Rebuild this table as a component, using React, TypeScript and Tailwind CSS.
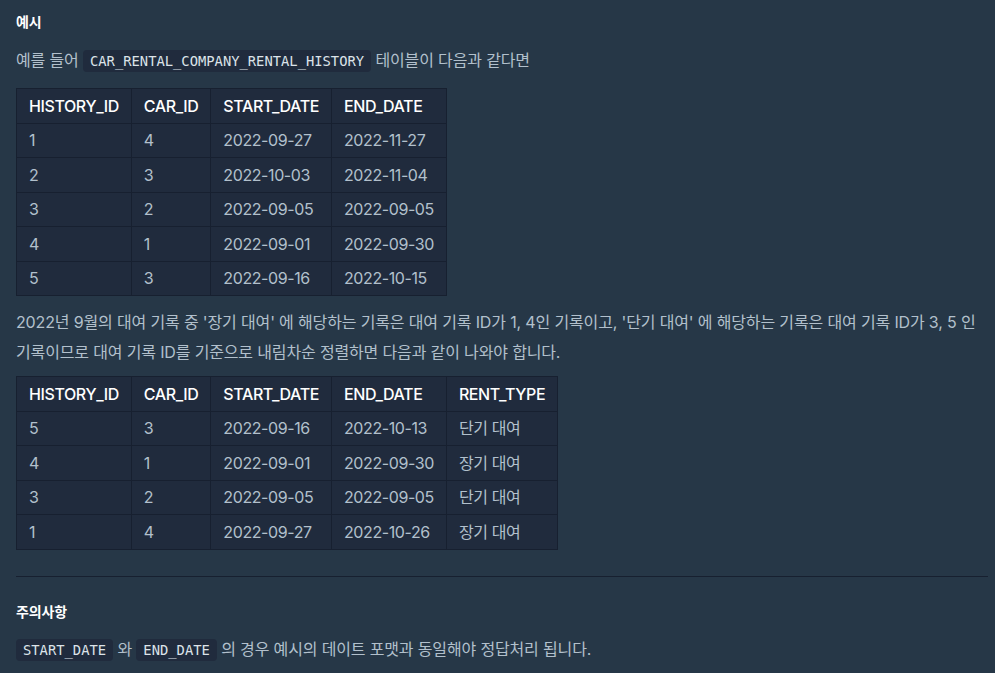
const font = { fontFamily: 'Inter, "Noto Sans CJK KR", sans-serif' };

const table1 = [
  ['1', '4', '2022-09-27', '2022-11-27'],
  ['2', '3', '2022-10-03', '2022-11-04'],
  ['3', '2', '2022-09-05', '2022-09-05'],
  ['4', '1', '2022-09-01', '2022-09-30'],
  ['5', '3', '2022-09-16', '2022-10-15'],
];

const table2 = [
  ['5', '3', '2022-09-16', '2022-10-13', '단기 대여'],
  ['4', '1', '2022-09-01', '2022-09-30', '장기 대여'],
  ['3', '2', '2022-09-05', '2022-09-05', '단기 대여'],
  ['1', '4', '2022-09-27', '2022-10-26', '장기 대여'],
];

function Code({ children }: { children: React.ReactNode }) {
  return (
    <code className="rounded-[4px] bg-[#202b3d] px-[7px] py-[3px] font-['DejaVu_Sans_Mono',monospace] text-[13.8px] tracking-normal text-[#dce3e9]">
      {children}
    </code>
  );
}

function DataTable({ head, rows }: { head: string[]; rows: string[][] }) {
  return (
    <table className="border-collapse bg-[#202b3d] text-[16px] tracking-[-0.4px]">
      <thead>
        <tr>
          {head.map((h) => (
            <th key={h} className="h-[34.5px] border border-[#172030] px-3 text-left font-medium text-white">
              {h}
            </th>
          ))}
        </tr>
      </thead>
      <tbody>
        {rows.map((r, i) => (
          <tr key={i}>
            {r.map((c, j) => (
              <td key={j} className="h-[34.5px] border border-[#172030] px-3 text-[#b2c0cc]">
                {c}
              </td>
            ))}
          </tr>
        ))}
      </tbody>
    </table>
  );
}

export default function App() {
  return (
    <div
      className="min-h-screen bg-[#263747] pl-4 pr-[7px] pt-[12px] text-[16px] tracking-[-0.15px] text-[#b2c0cc]"
      style={font}
    >
      <h5 className="text-[14px] font-bold leading-[20px] text-white">예시</h5>
      <p className="mt-[18px] leading-[20px]">
        예를 들어 <Code>CAR_RENTAL_COMPANY_RENTAL_HISTORY</Code> 테이블이 다음과 같다면
      </p>
      <div className="mt-[17px]">
        <DataTable head={['HISTORY_ID', 'CAR_ID', 'START_DATE', 'END_DATE']} rows={table1} />
      </div>
      <p className="mt-[11px] leading-[30px]">
        2022년 9월의 대여 기록 중 '장기 대여' 에 해당하는 기록은 대여 기록 ID가 1, 4인 기록이고, '단기 대여' 에 해당하는 기록은 대여 기록 ID가 3, 5 인
        기록이므로 대여 기록 ID를 기준으로 내림차순 정렬하면 다음과 같이 나와야 합니다.
      </p>
      <div className="mt-[9px]">
        <DataTable head={['HISTORY_ID', 'CAR_ID', 'START_DATE', 'END_DATE', 'RENT_TYPE']} rows={table2} />
      </div>
      <hr className="mt-[26px] border-t border-[#172030]" />
      <h5 className="mt-[25px] text-[14px] font-bold leading-[20px] text-white">주의사항</h5>
      <p className="mt-[17px] leading-[20px]">
        <Code>START_DATE</Code> 와 <Code>END_DATE</Code> 의 경우 예시의 데이트 포맷과 동일해야 정답처리 됩니다.
      </p>
    </div>
  );
}
